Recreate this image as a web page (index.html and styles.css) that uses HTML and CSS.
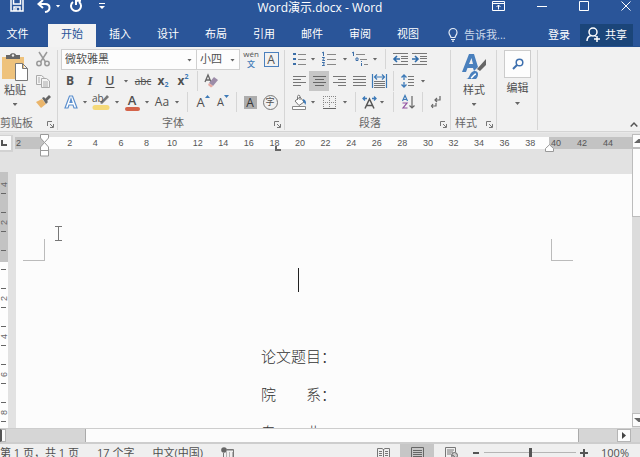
FILE: index.html
```html
<!DOCTYPE html>
<html lang="zh-CN">
<head>
<meta charset="utf-8">
<title>Word演示.docx - Word</title>
<link rel="stylesheet" href="styles.css">
</head>
<body>
<div class="app">
  <header class="titlebar">
    <div class="quick">
      <button class="qbtn save" aria-label="保存"><svg width="14" height="14" viewBox="0 0 14 14"><path d="M1 0V12H13V0M3.500 0V5H10.500V0M4 12V8H10V12M6 9V12" fill="none" stroke="#fff" stroke-width="1.500"/></svg></button>
      <button class="qbtn undo" aria-label="撤消"><svg width="14" height="13" viewBox="0 0 14 13"><path d="M6 0L1.500 4L6 8M2 4H8C14 4 14 11 8 12" fill="none" stroke="#fff" stroke-width="2"/></svg></button>
      <button class="qbtn arrow" aria-label="撤消列表"><i class="caret light"></i></button>
      <button class="qbtn redo" aria-label="重复"><svg width="14" height="13" viewBox="0 0 14 13"><path d="M4 2A5 5 0 1 0 10 2M7 5V0.800H12" fill="none" stroke="#fff" stroke-width="2"/></svg></button>
      <button class="qbtn more" aria-label="自定义快速访问工具栏"><svg width="6" height="7" viewBox="0 0 6 7"><path d="M0 0H6V1H0ZM0 3H6L3 6Z" fill="#fff"/></svg></button>
    </div>
    <h1 class="doc-name">Word演示.docx - Word</h1>
    <div class="window">
      <button class="wbtn" aria-label="功能区显示选项"><svg width="13" height="10" viewBox="0 0 13 10"><path d="M.5.500H12.500V9.500H.5ZM.5 2.500H12.500M6.500 8.500V4M4.500 6L6.500 4L8.500 6" fill="none" stroke="#fff"/></svg></button>
      <button class="wbtn" aria-label="最小化"><svg width="10" height="10" viewBox="0 0 10 10"><path d="M0 5.500H10" stroke="#fff"/></svg></button>
      <button class="wbtn" aria-label="最大化"><svg width="10" height="10" viewBox="0 0 10 10"><path d="M.5.500H9.500V9.500H.5Z" fill="none" stroke="#fff"/></svg></button>
      <button class="wbtn" aria-label="关闭"><svg width="10" height="10" viewBox="0 0 10 10"><path d="M.5.500L9.500 9.500M9.500.5L.5 9.500" stroke="#fff"/></svg></button>
    </div>
  </header>

  <nav class="tabs">
    <button class="tab file">文件</button>
    <button class="tab active">开始</button>
    <button class="tab">插入</button>
    <button class="tab">设计</button>
    <button class="tab">布局</button>
    <button class="tab">引用</button>
    <button class="tab">邮件</button>
    <button class="tab">审阅</button>
    <button class="tab">视图</button>
    <button class="tell"><svg width="10" height="14" viewBox="0 0 10 14"><path d="M3 9.500C3 8 1 7 1 4.500A4 4 0 0 1 9 4.500C9 7 7 8 7 9.500ZM3 11.500H7M4 13.200H6" fill="none" stroke="#e4ebf5" stroke-width="1.200"/></svg>告诉我...</button>
    <button class="login">登录</button>
    <button class="share"><svg width="15" height="16" viewBox="0 0 15 16"><circle cx="7" cy="5" r="4" fill="none" stroke="#fff" stroke-width="1.500"/><path d="M1 14C1 11 3 9 5.500 8.500M8.500 8.500L10 9.500M11 9V15M8 12H14" fill="none" stroke="#fff" stroke-width="1.500"/></svg>共享</button>
  </nav>

  <section class="ribbon">
    <div class="group clipboard">
      <div class="body clip-body">
        <button class="big paste"><svg width="26" height="28" viewBox="0 0 26 28"><path d="M0 4H22V26H0Z" fill="#eec27c"/><path d="M4 6V2H8C8-.5 14-.5 14 2H18V6Z" fill="#666"/><circle cx="11" cy="2.500" r="1.200" fill="#f1f1f1"/><path d="M13.500 10.500H20.500L25.500 15.500V27.500H13.500ZM20.500 10.500V15.500H25.500" fill="#fff" stroke="#777"/></svg><span>粘贴</span><i class="caret"></i></button>
        <div class="clip-tools">
          <button class="tool" aria-label="剪切"><svg width="14" height="15" viewBox="0 0 14 15"><path d="M3 0L9.500 10M11 0L4.500 10" stroke="#999" stroke-width="1.500"/><g fill="none" stroke="#999" stroke-width="1.500"><circle cx="3" cy="11.500" r="2.200"/><circle cx="11" cy="11.500" r="2.200"/></g></svg></button>
          <button class="tool" aria-label="复制"><svg width="14" height="13" viewBox="0 0 14 13"><g fill="#f4f4f4" stroke="#aaa"><path d="M.5.500H5.500L8.500 3V9.500H.5Z"/><path d="M5.500 3.500H10.500L13.500 6V12.500H5.500Z"/><path d="M2 3H4M2 5H4M2 7H4M7 7H12M7 9H12M7 11H12"/></g></svg></button>
          <button class="tool" aria-label="格式刷"><svg width="15" height="14" viewBox="0 0 15 14"><path d="M0 7L6 4L10 9L5 13Z" fill="#eab56b"/><path d="M6 3L8 2L12 7L10 9ZM9 4L13 0L15 2L11 6Z" fill="#666"/></svg></button>
        </div>
      </div>
      <div class="foot"><span>剪贴板</span><button class="launch" aria-label="剪贴板设置"><svg width="7" height="7" viewBox="0 0 7 7"><path d="M.5 5V.5H5M3 3L6 6M6.500 3V6.500H3" fill="none" stroke="#777"/></svg></button></div>
    </div>

    <div class="group font">
      <div class="body rows">
        <div class="row font-pick">
          <label class="pick"><select aria-label="字体"><option>微软雅黑</option></select><i class="caret"></i></label>
          <label class="pick"><select aria-label="字号"><option>小四</option></select><i class="caret"></i></label>
          <button class="tool pinyin" aria-label="拼音指南"><span>wén</span><b>文</b></button>
          <button class="tool" aria-label="字符边框"><span class="boxed">A</span></button>
        </div>
        <div class="row font-style">
          <button class="tool bold">B</button>
          <button class="tool ital">I</button>
          <button class="tool under">U</button>
          <button class="tool" aria-label="下划线列表"><i class="caret"></i></button>
          <button class="tool strike">abc</button>
          <button class="tool script">x<sub>2</sub></button>
          <button class="tool script">x<sup>2</sup></button>
          <i class="sep"></i>
          <button class="tool" aria-label="清除格式"><svg width="15" height="14" viewBox="0 0 15 14"><path d="M1 8L4 1L7 8M2 6H6" fill="none" stroke="#666" stroke-width="1.300"/><path d="M5 9L10 3L14 6L9 12Z" fill="#9c8ca8"/><path d="M5 9L9 12L7 13.500L4 11Z" fill="#e7a8a0"/></svg></button>
        </div>
        <div class="row font-color">
          <button class="tool" aria-label="文本效果"><svg width="14" height="14" viewBox="0 0 14 14"><path d="M1 13L5.500 1H8.500L13 13H10L9 10H5L4 13ZM6 7.500H8L7 4Z" fill="#fff" stroke="#5b8fce" stroke-width="1.200"/></svg></button>
          <button class="tool" aria-label="文本效果列表"><i class="caret"></i></button>
          <button class="tool mark" aria-label="突出显示"><span>ab</span><svg width="18" height="16" viewBox="0 0 18 16"><path d="M8 9L15 1L17 3L10 10Z" fill="#777"/><path d="M3 13.500H15" stroke="#f5d978" stroke-width="5" stroke-linecap="round"/></svg></button>
          <button class="tool" aria-label="突出显示列表"><i class="caret"></i></button>
          <button class="tool ink">A</button>
          <button class="tool" aria-label="字体颜色列表"><i class="caret"></i></button>
          <button class="tool case">Aa</button>
          <button class="tool" aria-label="更改大小写列表"><i class="caret"></i></button>
          <i class="sep"></i>
          <button class="tool grow" aria-label="增大字号"><span>A</span><svg width="5" height="3" viewBox="0 0 5 3"><path d="M0 3L2.500 0L5 3Z" fill="#3d7ab8"/></svg></button>
          <button class="tool grow small" aria-label="减小字号"><span>A</span><svg width="5" height="3" viewBox="0 0 5 3"><path d="M0 0L2.500 3L5 0Z" fill="#3d7ab8"/></svg></button>
          <i class="sep"></i>
          <button class="tool" aria-label="字符底纹"><span class="shaded">A</span></button>
          <button class="tool" aria-label="带圈字符"><span class="ringed">字</span></button>
        </div>
      </div>
      <div class="foot"><span>字体</span><button class="launch" aria-label="字体设置"><svg width="7" height="7" viewBox="0 0 7 7"><path d="M.5 5V.5H5M3 3L6 6M6.500 3V6.500H3" fill="none" stroke="#777"/></svg></button></div>
    </div>

    <div class="group para">
      <div class="body rows">
        <div class="row para-list">
          <button class="tool" aria-label="项目符号"><svg width="13" height="14" viewBox="0 0 13 14"><path d="M0 1H3V3H0ZM0 6H3V8H0ZM0 11H3V13H0Z" fill="#3d6fa8"/><path d="M5 2.500H13M5 7.500H13M5 12.500H13" stroke="#888"/></svg></button>
          <button class="tool" aria-label="项目符号列表"><i class="caret"></i></button>
          <button class="tool" aria-label="编号"><svg width="14" height="14" viewBox="0 0 14 14"><path d="M0 1L1.500 0V4M0 5.500H2.500L.5 8.500H3M0 10.500H2.500L1.500 12L2.500 13.500H0" fill="none" stroke="#3d6fa8"/><path d="M5 2.500H14M5 7.500H14M5 12.500H14" stroke="#888"/></svg></button>
          <button class="tool" aria-label="编号列表"><i class="caret"></i></button>
          <button class="tool" aria-label="多级列表"><svg width="16" height="14" viewBox="0 0 16 14"><path d="M0 1L1.500 0V4M4 6H6V8.500H4ZM9.500 9V10M9.500 11V14" fill="none" stroke="#3d6fa8"/><path d="M4 2.500H13M8 7.500H15M12 12.500H16" stroke="#888"/></svg></button>
          <button class="tool" aria-label="多级列表选项"><i class="caret"></i></button>
          <i class="sep"></i>
          <button class="tool" aria-label="减少缩进量"><svg width="15" height="12" viewBox="0 0 15 12"><path d="M0 .5H15M8 3.500H15M8 5.500H15M8 8.500H15M0 11.500H15" stroke="#777"/><path d="M7 6H1M4 3L1 6L4 9" fill="none" stroke="#2f6cab" stroke-width="1.600"/></svg></button>
          <button class="tool" aria-label="增加缩进量"><svg width="15" height="12" viewBox="0 0 15 12"><path d="M0 .5H15M8 3.500H15M8 5.500H15M8 8.500H15M0 11.500H15" stroke="#777"/><path d="M0 6H6M3 3L6 6L3 9" fill="none" stroke="#2f6cab" stroke-width="1.600"/></svg></button>
        </div>
        <div class="row para-align">
          <button class="tool" aria-label="左对齐"><svg width="13" height="10" viewBox="0 0 13 10"><path d="M0 .5H13M0 3.500H8M0 6.500H13M0 9.500H8" stroke="#777"/></svg></button>
          <button class="tool on" aria-label="居中"><svg width="13" height="10" viewBox="0 0 13 10"><path d="M0 .5H13M2 3.500H11M0 6.500H13M2 9.500H11" stroke="#666"/></svg></button>
          <button class="tool" aria-label="右对齐"><svg width="13" height="10" viewBox="0 0 13 10"><path d="M0 .5H13M5 3.500H13M0 6.500H13M5 9.500H13" stroke="#777"/></svg></button>
          <button class="tool" aria-label="两端对齐"><svg width="13" height="10" viewBox="0 0 13 10"><path d="M0 .5H13M0 3.500H13M0 6.500H13M0 9.500H13" stroke="#777"/></svg></button>
          <button class="tool" aria-label="分散对齐"><svg width="15" height="14" viewBox="0 0 15 14"><path d="M.5 0V14M14.500 0V14M2 3H13M5 .5L2.500 3L5 5.500M10 .5L12.500 3L10 5.500" fill="none" stroke="#3d7ab8" stroke-width="1.200"/><path d="M2 7.500H13M2 9.500H13M2 11.500H13M2 13.500H13" stroke="#777"/></svg></button>
          <i class="sep"></i>
          <button class="tool" aria-label="行距"><svg width="14" height="14" viewBox="0 0 14 14"><path d="M3 1V6M3 8V13M.5 3.500L3 1L5.500 3.500M.5 10.500L3 13L5.500 10.500" fill="none" stroke="#3d7ab8" stroke-width="1.300"/><path d="M7 2.500H13M7 5.500H13M7 8.500H13M7 11.500H13" stroke="#777"/></svg></button>
          <button class="tool" aria-label="行距列表"><i class="caret"></i></button>
        </div>
        <div class="row para-fill">
          <button class="tool" aria-label="底纹"><svg width="15" height="15" viewBox="0 0 15 15"><path d="M3 6L8 2L12 7L7 10.500ZM5.500 5V1.500C5.500-.2 8-.2 8 1.500V5" fill="#fff" stroke="#777"/><path d="M11 4C14 5 15 8 13 10C13 8 12 8 11 6Z" fill="#3d7ab8"/><path d="M.5 11.500H13.500V14.500H.5Z" fill="#fff" stroke="#888"/></svg></button>
          <button class="tool" aria-label="底纹列表"><i class="caret"></i></button>
          <button class="tool" aria-label="边框"><svg width="13" height="13" viewBox="0 0 13 13"><path d="M.5 0V12M6.500 0V12M12.500 0V12M0 .5H13M0 6.500H13" stroke="#888" stroke-dasharray="1 1"/><path d="M0 12.500H13" stroke="#666"/></svg></button>
          <button class="tool" aria-label="边框列表"><i class="caret"></i></button>
          <i class="sep"></i>
          <button class="tool" aria-label="中文版式"><svg width="15" height="13" viewBox="0 0 15 13"><path d="M3 12.500L7.500 3L12 12.500M4.500 9.500H10.500" fill="none" stroke="#555" stroke-width="1.500"/><path d="M5 2.500H1M3 .5L1 2.500L3 4.500M10 2.500H14M12 .5L14 2.500L12 4.500" fill="none" stroke="#3d7ab8" stroke-width="1.300"/></svg></button>
          <button class="tool" aria-label="中文版式列表"><i class="caret"></i></button>
          <i class="sep"></i>
          <button class="tool" aria-label="排序"><svg width="13" height="14" viewBox="0 0 13 14"><path d="M.5 6L3 .5L5.500 6M1.500 4.500H4.500" fill="none" stroke="#3d7ab8" stroke-width="1.200"/><path d="M.5 8H5L1 13H5.500" fill="none" stroke="#9050a0" stroke-width="1.200"/><path d="M10 1V13M7.500 10.500L10 13L12.500 10.500" fill="none" stroke="#666" stroke-width="1.200"/></svg></button>
          <i class="sep"></i>
          <button class="tool" aria-label="显示编辑标记"><svg width="10" height="12" viewBox="0 0 10 12"><path d="M9 0V4H4M6 2L4 4L6 6M5 7V10H0M2 8L.5 10L2 12" fill="none" stroke="#666" stroke-width="1.200"/></svg></button>
        </div>
      </div>
      <div class="foot"><span>段落</span><button class="launch" aria-label="段落设置"><svg width="7" height="7" viewBox="0 0 7 7"><path d="M.5 5V.5H5M3 3L6 6M6.500 3V6.500H3" fill="none" stroke="#777"/></svg></button></div>
    </div>

    <div class="group styles">
      <div class="body">
        <button class="big"><svg width="26" height="28" viewBox="0 0 26 28"><path d="M1 19L8 1H13L17 14L13 18L12 15H6.500L5 19ZM8 11H12L10.500 5Z" fill="#4a80bd"/><path d="M16 16L25 6V12L19 18Z" fill="#666"/><path d="M5 26C9 26 8 19 13 18C18 17 18 23 15 26Z" fill="#4a80bd"/><path d="M10 25C12 24 13 21 15 21" stroke="#fff" stroke-width="1.500" fill="none"/></svg><span>样式</span><i class="caret"></i></button>
      </div>
      <div class="foot"><span>样式</span><button class="launch" aria-label="样式设置"><svg width="7" height="7" viewBox="0 0 7 7"><path d="M.5 5V.5H5M3 3L6 6M6.500 3V6.500H3" fill="none" stroke="#777"/></svg></button></div>
    </div>

    <div class="group edit">
      <div class="body">
        <button class="big"><span class="tile"><svg width="12" height="12" viewBox="0 0 12 12"><circle cx="7.500" cy="4.500" r="3.300" fill="none" stroke="#3d6fae" stroke-width="1.500"/><path d="M5 7L1 11" stroke="#3d6fae" stroke-width="2"/></svg></span><span>编辑</span><i class="caret"></i></button>
      </div>
    </div>
    <button class="collapse" aria-label="折叠功能区"><svg width="8" height="5" viewBox="0 0 8 5"><path d="M.7 4.500L4 1L7.300 4.500" fill="none" stroke="#555" stroke-width="1.500"/></svg></button>
  </section>

  <main class="workspace">
    <div class="desk">
      <div class="ruler-row">
        <button class="tabstop" aria-label="制表符"><svg width="6" height="6" viewBox="0 0 6 6"><path d="M1 0V5H6" fill="none" stroke="#555" stroke-width="2"/></svg></button>
        <div class="ruler">
          <div class="edge left"><span>2</span></div>
          <div class="scale">
            <svg class="indent first" width="9" height="23" viewBox="0 0 9 23"><path d="M.5.500H8.500V4L4.500 8.500L.5 4ZM4.500 8.500L8.500 13V16.500H.5V13ZM.5 16.500H8.500V22H.5Z" fill="#fff" stroke="#999"/></svg>
            <span>2</span><span>4</span><span>6</span><span>8</span><span>10</span><span>12</span><span>14</span><span>16</span><span class="stop">18<svg width="6" height="5" viewBox="0 0 6 5"><path d="M1 0V4H6" fill="none" stroke="#666" stroke-width="2"/></svg></span><span>20</span><span>22</span><span>24</span><span>26</span><span>28</span><span>30</span><span>32</span><span>34</span><span>36</span><span>38</span>
            <svg class="indent last" width="9" height="8" viewBox="0 0 9 8"><path d="M4.500.7L8.500 4.500V7.500H.5V4.500Z" fill="#fff" stroke="#999"/></svg>
          </div>
          <div class="edge right"><span>40</span><span>42</span><span>44</span></div>
        </div>
      </div>
      <div class="doc-row">
        <div class="vruler">
          <div class="vmargin"><i>4</i><i></i><i>2</i><i></i></div>
          <div class="vbody"><i class="part"></i><i></i><i>2</i><i></i><i>4</i><i></i><i>6</i><i></i><i>8</i></div>
        </div>
        <article class="page">
          <i class="crop crop-l"></i><i class="crop crop-r"></i><i class="insertion"></i>
          <svg class="ibeam" width="7" height="15" viewBox="0 0 7 15"><path d="M0 .5H7M3.500 0V15M0 14.500H7" stroke="#777"/></svg>
          <p>论文题目：</p>
          <p>院　　系：</p>
          <p>专　　业：</p>
        </article>
      </div>
    </div>
    <div class="vscroll">
      <div class="vbtn"><svg width="6" height="4" viewBox="0 0 6 4"><path d="M0 4L4.500 0H6V4Z" fill="#666"/></svg></div>
      <div class="vthumb"></div>
      <div class="vtrack"></div>
      <div class="vbtn"><svg width="6" height="4" viewBox="0 0 6 4"><path d="M0 0H6V4H4.500Z" fill="#666"/></svg></div>
    </div>
  </main>

  <div class="hscroll">
    <div class="hbtn cut"></div>
    <div class="hspace start"></div>
    <div class="hthumb"></div>
    <div class="hspace"></div>
    <div class="hbtn"><svg width="4" height="7" viewBox="0 0 4 7"><path d="M0 0L4 3.500L0 7Z" fill="#444"/></svg></div>
  </div>

  <footer class="status">
    <span class="pages">第 1 页，共 1 页</span>
    <span class="words">17 个字</span>
    <span class="lang">中文(中国)</span>
    <svg width="13" height="13" viewBox="0 0 13 13"><path d="M5.500 2.500H12.500V12.500H2.500V6" fill="none" stroke="#777"/><circle cx="3" cy="3" r="2.800" fill="#666"/><path d="M6 3H12M5 6H6M8 6H9M11 6H12M5 8H6M8 8H9M11 8H12M5 10H6M8 10H9M11 10H12" stroke="#777"/></svg>
    <div class="views">
      <button class="view" aria-label="阅读视图"><svg width="13" height="12" viewBox="0 0 13 12"><path d="M.5 1.500H5L6.500 2.500L8 1.500H12.500V10.500H8L6.500 11.500L5 10.500H.5ZM6.500 2V11M2 4.500H5M2 6.500H5M2 8.500H5M8 4.500H11M8 6.500H11M8 8.500H11" fill="none" stroke="#777"/></svg></button>
      <button class="view on" aria-label="页面视图"><svg width="13" height="13" viewBox="0 0 13 13"><path d="M.5.500H12.500V12.500H.5ZM2 3.500H11M2 5.500H11M2 7.500H11M2 9.500H11" fill="none" stroke="#666"/></svg></button>
      <button class="view" aria-label="Web 版式视图"><svg width="13" height="13" viewBox="0 0 13 13"><path d="M10.500 5V.5H.5V10.500H6M2 3H9M2 5H8M2 7H6" fill="none" stroke="#777"/><circle cx="9.500" cy="8.500" r="3" fill="#ccc" stroke="#666"/><path d="M7 8L9 9L10 11" stroke="#666" fill="none"/></svg></button>
    </div>
    <button class="zoom" aria-label="缩小"><svg width="8" height="8" viewBox="0 0 8 8"><path d="M1 4H7" stroke="#555" stroke-width="2"/></svg></button>
    <input class="slider" type="range" min="0" max="100" value="50" aria-label="缩放">
    <button class="zoom" aria-label="放大"><svg width="8" height="8" viewBox="0 0 8 8"><path d="M0 4H8M4 0V8" stroke="#555" stroke-width="2"/></svg></button>
    <span class="percent">100%</span>
  </footer>
</div>
</body>
</html>
```
FILE: styles.css
```css
* { box-sizing: border-box; }
html, body { margin: 0; height: 100%; overflow: hidden; }
body {
  font: 11px/16px "Open Sans", "Noto Sans CJK SC", sans-serif;
  color: #505050;
  background: #e2e2e2;
}
button, select, input { font: inherit; color: inherit; margin: 0; padding: 0; border: 0; background: none; border-radius: 0; }
button { display: flex; align-items: center; justify-content: center; white-space: nowrap; }
svg { display: block; flex: none; overflow: visible; }
i { font-style: normal; }

/* The status bar runs a little past the lower window edge. */
.app { display: flex; flex-direction: column; height: calc(100vh + 5px); }

/* Title bar */
.titlebar {
  display: grid; grid-template: 12px / 1fr auto 1fr; align-items: center;
  height: 24px; background: #2a5599; color: #fff;
}
.quick { display: flex; align-items: center; padding-left: 10px; }
.undo { margin-left: 13px; }
.arrow { width: 14px; }
.redo { margin-left: 4px; }
.more { margin-left: 16px; }
.doc-name { margin: 0; padding-top: 4px; font-size: 12px; font-weight: 400; line-height: 16px; }
.window { display: flex; justify-content: flex-end; gap: 32px; padding-right: 9px; }
.caret { display: block; width: 5px; height: 3px; background: #666; clip-path: polygon(0 0, 100% 0, 50% 100%); }
.caret.light { background: #fff; }

/* Tabs */
.tabs { display: flex; align-items: stretch; height: 23px; background: #2a5599; color: #fff; border-bottom: 1px solid #24508f; }
.tab { width: 48px; padding-bottom: 2px; }
.file { padding-right: 13px; }
.active { background: #f3f3f3; color: #2a5599; margin-bottom: -1px; padding-bottom: 3px; }
.tell { gap: 6px; margin-left: 16px; color: #cbd8ea; }
.login { margin-left: auto; padding: 0 10px; }
.share { gap: 4px; width: 53px; margin: 0 7px 0 0; background: #1b4579; }

/* Ribbon */
.ribbon { display: flex; height: 85px; background: #f1f1f1; border-bottom: 1px solid #d4d4d4; }
.group { position: relative; display: flex; flex-direction: column; flex: none; }
.group::after { content: ""; position: absolute; right: 0; top: 3px; bottom: 1px; width: 1px; background: #d6d6d6; }
.body { flex: 1; }
.foot { display: flex; height: 16px; align-items: center; justify-content: center; color: #666; }
.launch { position: absolute; right: 4px; bottom: 3px; }
.clipboard { width: 58px; }
.font { width: 227px; padding-left: 3px; }
.para { width: 166px; padding-left: 4px; }
.styles { width: 46px; }
.edit { width: 41px; }
.clipboard .foot, .styles .foot { justify-content: flex-start; }
.styles .foot { padding-left: 4px; }
.clip-body { display: flex; }
.clip-tools { display: grid; grid-template-rows: 24px 20px 22px; align-items: center; width: 26px; }
.clip-tools .tool { width: 26px; }
.big { flex-direction: column; justify-content: flex-start; width: 100%; padding-top: 6px; gap: 1px; line-height: 16px; }
.big .caret { margin-top: 4px; }
.paste { width: 30px; align-items: center; }
.tile { display: flex; align-items: center; justify-content: center; width: 27px; height: 28px; border: 1px solid #ccc; background: #fdfdfd; }
.edit .big { padding-top: 3px; gap: 2px; }
.rows { display: grid; grid-template-rows: 24px 20px 22px; }
.row { display: grid; align-items: center; }
.tool { height: 20px; position: relative; }
.sep { justify-self: center; width: 1px; height: 20px; background: #d6d6d6; }
.on { background: #c6c6c6; }
.font-pick { grid-template-columns: 136px 43px 22px 18px; }
.font-style { grid-template-columns: 18px 22px 18px 14px 20px 20px 20px 8px 20px; }
.font-color { grid-template-columns: 20px 8px 24px 8px 22px 8px 22px 8px 12px 20px 20px 6px 22px 18px; }
.para-list { grid-template-columns: 20px 8px 24px 8px 22px 8px 12px 18px 20px; }
.para-align { grid-template-columns: 20px 20px 20px 20px 20px 8px 22px 8px; }
.para-fill { grid-template-columns: 20px 8px 24px 8px 12px 16px 10px 12px 18px 10px 18px; }

.pick { position: relative; height: 21px; border: 1px solid #d0d0d0; background: #fdfdfd; }
.pick + .pick { margin-left: -1px; }
.pick select { appearance: none; width: 100%; height: 100%; padding-left: 3px; }
.pick .caret { position: absolute; right: 4px; top: 9px; }
.pinyin { flex-direction: column; font-size: 8px; line-height: 8px; gap: 2px; }
.pinyin b { color: #3d7ab8; font-weight: 500; }
.boxed { width: 15px; height: 15px; border: 1px solid #4a80bd; font-size: 12px; line-height: 13px; }
.bold { font-weight: 700; font-size: 12px; }
.ital { font-family: "Liberation Serif", serif; font-style: italic; font-weight: 700; font-size: 13px; }
.under { text-decoration: underline; font-size: 12px; font-weight: 600; text-underline-offset: 2px; }
.strike { font-size: 10px; text-decoration: line-through; }
.script { font-size: 12px; font-weight: 700; }
.script sub, .script sup { color: #3d7ab8; font-size: 7px; line-height: 8px; }
.script sub { padding-top: 8px; }
.script sup { padding-bottom: 8px; }
.mark span { position: absolute; left: 3px; top: 0; font-size: 10px; line-height: 12px; }
.ink { flex-direction: column; font-size: 13px; font-weight: 600; line-height: 13px; }
.ink::after { content: ""; width: 15px; height: 4px; border-radius: 2px; background: #d4644a; }
.case { font-size: 12px; }
.grow { font-size: 13px; }
.grow svg { align-self: flex-start; margin-top: 3px; }
.small { font-size: 11px; }
.shaded { width: 13px; height: 13px; background: #adadad; color: #333; font-size: 12px; line-height: 13px; }
.ringed { width: 15px; height: 15px; border: 1px solid #777; border-radius: 50%; font-size: 9px; line-height: 12px; }
.collapse { margin-left: auto; align-self: flex-end; padding: 0 2px 4px; }

/* Workspace */
.workspace { display: flex; flex: 1; min-height: 0; border-top: 1px solid #e8e8e8; background: #e2e2e2; }
.desk { display: flex; flex-direction: column; flex: 1; min-width: 0; }
.ruler-row { display: flex; flex: none; height: 39px; padding-top: 2px; align-items: flex-start; }
.tabstop { width: 13px; height: 17px; padding-right: 4px; background: #fbfbfb; border: solid #d2d2d2; border-width: 1px 2px 2px 0; }
.ruler { display: flex; flex: 1; height: 12px; margin: 2px 0 0 2px; font: 9px/12px "Liberation Sans", sans-serif; color: #555; }
.edge { background: #c3c3c3; }
.left { width: 29px; padding-left: 1px; }
.right { display: flex; width: 83px; padding-left: 2px; }
.right span { width: 26px; }
.scale { position: relative; display: flex; flex: 1; padding: 0 6px 0 13px; background: #fdfdfd; }
.scale span { position: relative; flex: 1 1 0; text-align: center; }
.indent { position: absolute; }
.first { left: -4px; top: -3px; }
.last { right: -5px; top: 7px; }
.stop svg { position: absolute; left: 13px; top: 9px; }
.doc-row { display: flex; flex: 1; min-height: 0; overflow: hidden; }
.vruler { width: 8px; flex: none; font: 9px/8px "Liberation Sans", sans-serif; color: #666; }
.vmargin { height: 90px; padding-top: 3px; background: #c3c3c3; }
.vbody { height: 100%; background: #fdfdfd; }
.vruler i { display: flex; align-items: center; justify-content: center; width: 8px; height: 19px; writing-mode: vertical-rl; transform: rotate(180deg); background: linear-gradient(#666, #666) 2px 0 / 5px 1px no-repeat; }
.vruler .part { height: 8px; }
.page { position: relative; flex: 1; margin: 2px 0 0 8px; padding: 163px 0 0 245px; background: #fcfcfc; color: #333; overflow: hidden; }
.page p { margin: 0; font-size: 15px; line-height: 38px; white-space: nowrap; font-weight: 300; }
.crop { position: absolute; top: 65px; width: 22px; height: 22px; border: 1px solid #bbb; border-top: 0; }
.crop-l { left: 7px; border-left: 0; }
.crop-r { right: 59px; border-right: 0; }
.insertion { position: absolute; left: 282px; top: 94px; width: 1px; height: 24px; background: #222; }
.ibeam { position: absolute; left: 39px; top: 52px; }

/* Scroll bars */
.vscroll { display: flex; flex-direction: column; width: 8px; padding: 1px 0; }
.vbtn, .vthumb { background: #fcfcfc; border: 1px solid #bcbcbc; border-right: 0; }
.vbtn { display: flex; align-items: center; justify-content: flex-end; height: 14px; }
.vthumb { height: 69px; }
.vtrack { flex: 1; background: #dcdcdc; }
.hscroll { display: flex; flex: none; height: 16px; padding-right: 9px; background: #d6d6d6; border: solid #cdcdcd; border-width: 1px 0 2px; }
.hspace { width: 38px; }
.start { width: 79px; }
.hthumb { flex: 1; background: #fcfcfc; border: solid #aaa; border-width: 0 1px; }
.hbtn { display: flex; align-items: center; justify-content: center; width: 14px; background: #fcfcfc; border: 1px solid #b5b5b5; }
.cut { width: 6px; border-left: 2px solid #555; }

/* Status bar */
.status { display: flex; flex: none; align-items: center; height: 18px; padding: 0 11px 0 0; background: #efefef; white-space: nowrap; }
.words { margin-left: 18px; }
.lang { margin: 0 18px; }
.views { display: flex; align-self: stretch; margin-left: auto; }
.view { width: 34px; }
.zoom { width: 12px; margin-left: 2px; }
.slider { appearance: none; width: 92px; height: 12px; margin-left: 2px; background: linear-gradient(#b5b5b5, #b5b5b5) 0 5px / 100% 1px no-repeat; }
.slider::-webkit-slider-thumb { appearance: none; width: 3px; height: 10px; background: #555; }
.percent { margin-left: 11px; }
```
